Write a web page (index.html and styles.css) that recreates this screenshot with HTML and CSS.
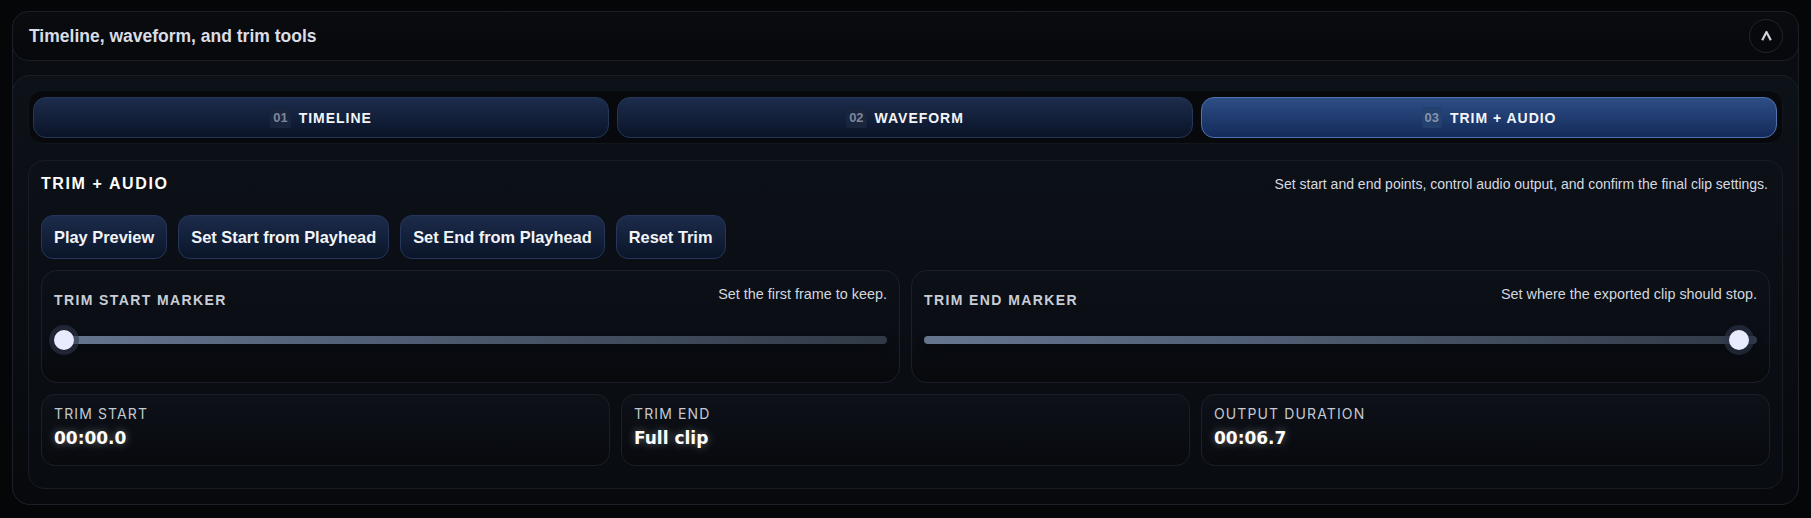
FILE: index.html
```html
<!DOCTYPE html>
<html lang="en">
<head>
<meta charset="utf-8">
<title>Timeline, waveform, and trim tools</title>
<link rel="stylesheet" href="styles.css">
</head>
<body>
<section class="panel">
  <header class="panel-header">
    <h2 class="panel-title">Timeline, waveform, and trim tools</h2>
    <button class="collapse-btn" aria-label="Collapse">
      <svg width="11" height="10" viewBox="0 0 11 10"><path d="M1.2 9.2 L5.5 1 L9.8 9.2" fill="none" stroke="#cdd2dc" stroke-width="2.2" stroke-linejoin="miter"/></svg>
    </button>
  </header>
  <div class="panel-body">
    <nav class="tabbar">
      <button class="tab"><span class="tab-num">01</span><span class="tab-label">TIMELINE</span></button>
      <button class="tab"><span class="tab-num">02</span><span class="tab-label">WAVEFORM</span></button>
      <button class="tab tab-active"><span class="tab-num">03</span><span class="tab-label">TRIM + AUDIO</span></button>
    </nav>
    <div class="section-card">
      <div class="section-head">
        <h3 class="section-title">TRIM + AUDIO</h3>
        <p class="section-desc">Set start and end points, control audio output, and confirm the final clip settings.</p>
      </div>
      <div class="actions">
        <button class="btn">Play Preview</button>
        <button class="btn">Set Start from Playhead</button>
        <button class="btn">Set End from Playhead</button>
        <button class="btn">Reset Trim</button>
      </div>
      <div class="slider-row">
        <div class="slider-card">
          <div class="slider-head">
            <span class="slider-label">TRIM START MARKER</span>
            <span class="slider-desc">Set the first frame to keep.</span>
          </div>
          <input class="range" type="range" min="0" max="1000" value="0">
        </div>
        <div class="slider-card">
          <div class="slider-head">
            <span class="slider-label">TRIM END MARKER</span>
            <span class="slider-desc">Set where the exported clip should stop.</span>
          </div>
          <input class="range" type="range" min="0" max="1000" value="990">
        </div>
      </div>
      <div class="stats">
        <div class="stat">
          <div class="stat-label">TRIM START</div>
          <div class="stat-value">00:00.0</div>
        </div>
        <div class="stat">
          <div class="stat-label">TRIM END</div>
          <div class="stat-value">Full clip</div>
        </div>
        <div class="stat">
          <div class="stat-label">OUTPUT DURATION</div>
          <div class="stat-value">00:06.7</div>
        </div>
      </div>
    </div>
  </div>
</section>
</body>
</html>
```
FILE: styles.css
```css
* { box-sizing: border-box; }
html, body { height: 100%; }
body {
  margin: 0;
  padding: 11px 12px;
  background: #050608;
  font-family: "Liberation Sans", Arial, sans-serif;
  color: #e6e9ef;
}
button { font-family: inherit; cursor: pointer; }
h2, h3, p { margin: 0; }

.panel {
  border: 1px solid #191d25;
  border-radius: 18px;
  background: linear-gradient(180deg, #0a0d12 0%, #07090c 100%);
}

.panel-header {
  margin: -1px -1px 0;
  height: 50px;
  border: 1px solid #1a1e26;
  border-radius: 16px;
  background: linear-gradient(180deg, #0a0c10 0%, #07080b 100%);
  display: flex;
  align-items: center;
  justify-content: space-between;
  padding: 0 15px 0 16px;
}
.panel-title {
  font-size: 17.5px;
  font-weight: 700;
  color: #d9dde5;
}
.collapse-btn {
  width: 34px;
  height: 34px;
  border-radius: 50%;
  border: 1px solid #20252e;
  background: #07090c;
  display: flex;
  align-items: center;
  justify-content: center;
  padding: 0;
}

.panel-body {
  margin: 14px -1px -1px;
  border: 1px solid #1a1f28;
  border-radius: 18px;
  background: linear-gradient(180deg, #0d1118 0%, #0a0d12 60%, #07090c 100%);
  padding: 14px 15px 15px;
  display: flex;
  flex-direction: column;
  gap: 16px;
}

.tabbar {
  display: grid;
  grid-template-columns: repeat(3, 1fr);
  gap: 8px;
  padding: 6px 5px 5px 4px;
  background: #07090d;
  border: 1px solid #11151c;
  border-radius: 14px;
}
.tab {
  height: 41px;
  border-radius: 13px;
  border: 1px solid #253656;
  background: linear-gradient(180deg, #1c2c4c 0%, #0a1428 100%);
  display: flex;
  align-items: center;
  justify-content: center;
  gap: 8px;
  color: #f3f5f9;
  padding: 0;
}
.tab-active {
  border-color: #4f73ad;
  background: linear-gradient(180deg, #2d4e86 0%, #142a5a 100%);
}
.tab-num {
  font-family: "Liberation Sans Narrow", "Liberation Sans", sans-serif;
  font-size: 13px;
  font-weight: 700;
  color: #7d879a;
  background: #19243d;
  padding: 3px 3px;
  border-radius: 2px;
  line-height: 15px;
}
.tab-active .tab-num {
  background: #24406e;
  color: #8593ad;
}
.tab-label {
  font-size: 14px;
  font-weight: 700;
  letter-spacing: 0.07em;
}

.section-card {
  border: 1px solid #181c25;
  border-radius: 16px;
  background: linear-gradient(180deg, #0c1017 0%, #090c11 100%);
  padding: 14px 12px 22px;
  display: flex;
  flex-direction: column;
  gap: 11px;
}
.section-head {
  display: flex;
  justify-content: space-between;
  align-items: center;
  height: 18px;
  margin-bottom: 11px;
}
.section-title {
  font-size: 16px;
  font-weight: 700;
  letter-spacing: 0.1em;
  color: #ffffff;
}
.section-desc {
  font-size: 14px;
  color: #d6dae2;
  margin-right: 2px;
}

.actions {
  display: flex;
  gap: 11px;
}
.btn {
  height: 44px;
  padding: 0 12px;
  border-radius: 12px;
  border: 1px solid #24365a;
  background: linear-gradient(180deg, #1c2b4b 0%, #0a1529 100%);
  color: #f2f4f8;
  font-size: 16.4px;
  font-weight: 700;
}

.slider-row {
  display: grid;
  grid-template-columns: 1fr 1fr;
  gap: 11px;
}
.slider-card {
  height: 113px;
  border: 1px solid #1a1f28;
  border-radius: 16px;
  background: linear-gradient(180deg, #0c1017 0%, #0a0d13 70%, #07090c 100%);
  padding: 15px 12px 0;
}
.slider-head {
  display: flex;
  justify-content: space-between;
  align-items: flex-start;
}
.slider-label {
  margin-top: 6px;
  font-size: 14px;
  font-weight: 700;
  letter-spacing: 0.1em;
  color: #c9cdd6;
}
.slider-desc {
  font-size: 14.4px;
  color: #d3d7df;
}

.range {
  -webkit-appearance: none;
  appearance: none;
  display: block;
  width: 100%;
  height: 30px;
  margin: 17px 0 0;
  background: transparent;
}
.range::-webkit-slider-runnable-track {
  height: 8px;
  border-radius: 4px;
  background: linear-gradient(90deg, #66768f 0%, #4d5a6f 45%, #313946 100%);
  box-shadow: 0 6px 10px rgba(0, 0, 0, 0.35);
}
.range::-webkit-slider-thumb {
  -webkit-appearance: none;
  appearance: none;
  width: 20px;
  height: 20px;
  margin-top: -6px;
  border-radius: 50%;
  background: #e8ebfd;
  box-shadow: 0 0 0 5px rgba(45, 55, 75, 0.6);
}

.stats {
  display: grid;
  grid-template-columns: repeat(3, 1fr);
  gap: 11px;
}
.stat {
  height: 72px;
  border: 1px solid #1a1f28;
  border-radius: 14px;
  background: linear-gradient(180deg, #0d1118 0%, #080a0e 100%);
  padding: 10px 12px 0;
}
.stat-label {
  font-family: Inter, "Liberation Sans", sans-serif;
  font-size: 14px;
  letter-spacing: 0.08em;
  color: #c3c8d1;
  line-height: 17px;
}
.stat-value {
  margin-top: 5px;
  font-family: "DejaVu Sans", Verdana, sans-serif;
  font-size: 17px;
  font-weight: 700;
  color: #ffffff;
  line-height: 22px;
  text-shadow: 0 0 8px rgba(255, 255, 255, 0.4);
}
```
